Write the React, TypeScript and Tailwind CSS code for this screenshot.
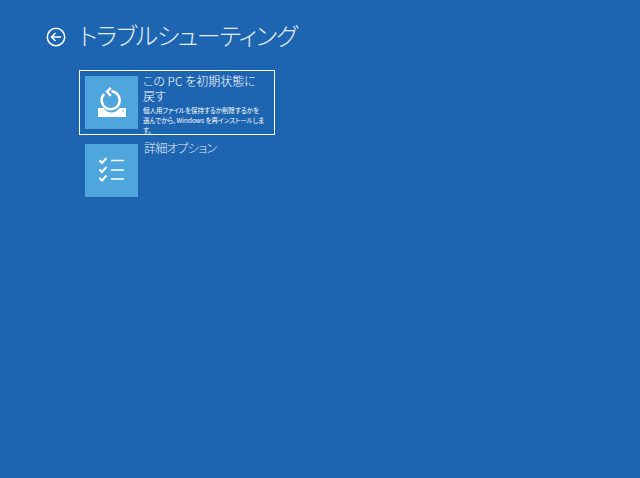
const jp = "font-['Noto_Sans_CJK_JP','Noto_Sans',sans-serif] [font-feature-settings:'palt']";

function ResetIcon() {
  return (
    <svg width="53" height="53" viewBox="0 0 53 53" fill="none">
      <path d="M19.200 18 A9 9 0 1 0 26.500 15.300" stroke="white" strokeWidth="2.500" />
      <path d="M25.800 11.800 L22 15.800 L25.800 19.800" stroke="white" strokeWidth="2.500" />
      <path d="M13 32 H18.500 A9.500 9.500 0 0 0 34.500 32 H41 V41 H13 Z" fill="white" />
      <circle cx="38" cy="35" r="0.800" fill="#4fa6dc" />
    </svg>
  );
}

function ChecklistIcon() {
  return (
    <svg width="53" height="53" viewBox="0 0 53 53" fill="none" stroke="white">
      <path d="M14.500 16.500 L17 19 L21.500 14" strokeWidth="2" />
      <path d="M14.500 25.500 L17 28 L21.500 23" strokeWidth="2" />
      <path d="M14.500 34 L17 36.500 L21.500 31.500" strokeWidth="2" />
      <path d="M26 16.500 H39 M26 26 H39 M26 35 H39" strokeWidth="1.500" />
    </svg>
  );
}

export default function App() {
  return (
    <div className={`w-[640px] h-[478px] bg-[#1d65b1] text-white overflow-hidden ${jp}`}>
      <header className="flex items-center pt-[3px] pl-[46px] gap-[13px] h-[70px]">
        <svg width="20" height="20" viewBox="0 0 20 20" fill="none" stroke="white" strokeWidth="1.500">
          <circle cx="10" cy="10" r="8.700" />
          <path d="M15 10 H5.500 M9.500 6 L5.500 10 L9.500 14" />
        </svg>
        <h1 className="text-[24px] leading-[36px] font-light -mt-[3px] tracking-[-1.2px] whitespace-nowrap text-[#e4edf7]">トラブルシューティング</h1>
      </header>
      <div className="flex flex-col gap-[9px] ml-[79px] w-[196px]">
        <div className="flex border border-white py-[5px] pl-[5px] pr-[2px] gap-[5px] h-[65px]">
          <div className="w-[53px] h-[53px] shrink-0 bg-[#4fa6dc]"><ResetIcon /></div>
          <div className="min-w-0 -mt-[3px]">
            <div className="text-[12px] leading-[15px] font-light">この PC を初期状態に<br />戻す</div>
            <div className="text-[6.500px] leading-[10px] mt-[2px]">個人用ファイルを保持するか削除するかを<br />選んでから、Windows を再インストールしま<br />す。</div>
          </div>
        </div>
        <div className="flex pl-[6px] gap-[6px] h-[53px]">
          <div className="w-[53px] h-[53px] shrink-0 bg-[#4fa6dc]"><ChecklistIcon /></div>
          <div className="text-[12px] leading-[15px] font-light -mt-[4px] tracking-[-0.6px] text-[#e4edf7]">詳細オプション</div>
        </div>
      </div>
    </div>
  );
}
